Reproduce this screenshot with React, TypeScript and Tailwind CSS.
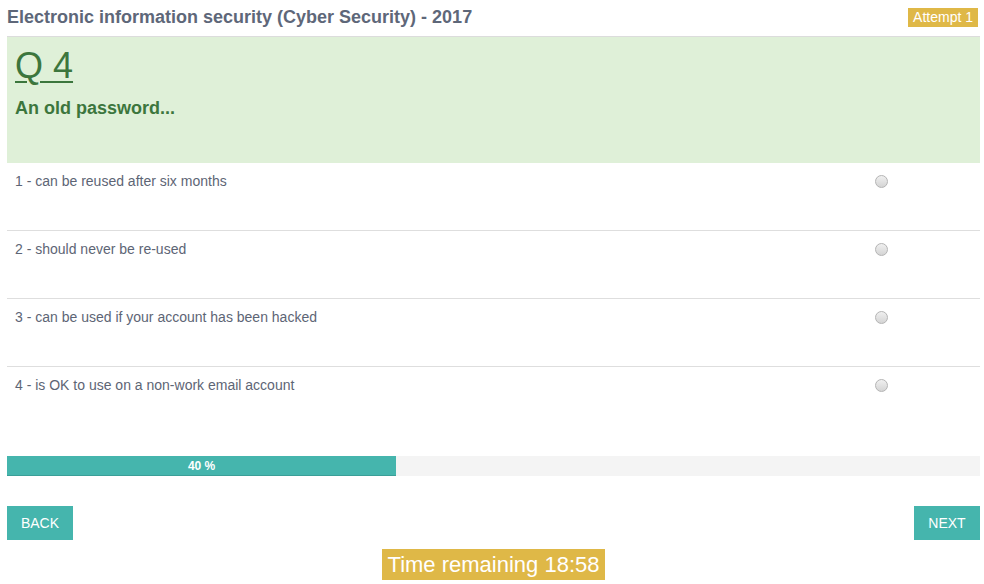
const options = [
  "1 - can be reused after six months",
  "2 - should never be re-used",
  "3 - can be used if your account has been hacked",
  "4 - is OK to use on a non-work email account",
];

function Radio() {
  return (
    <span className="block w-[13px] h-[13px] rounded-full border border-[#b4b4b4] bg-gradient-to-b from-[#f0f0f0] to-[#d4d4d4]" />
  );
}

export default function App() {
  const progress = 40;
  return (
    <div className="w-[984px] h-[584px] bg-white font-['Liberation_Sans',Arial,sans-serif] overflow-hidden">
      <div className="pl-[7px] pr-[4px]">
        {/* Header */}
        <div className="flex items-start justify-between h-[36px]">
          <h1 className="mt-[7px] text-[18px] font-bold text-[#5e6779] leading-[20px]">
            Electronic information security (Cyber Security) - 2017
          </h1>
          <span className="mt-[8px] mr-[2px] bg-[#dfb847] text-white text-[14px] leading-[19px] px-[5px]">
            Attempt 1
          </span>
        </div>

        {/* Question */}
        <div className="border-t border-[#dcdcdc] bg-[#dff0d8] h-[127px] px-[8px] pt-[8px] text-[#3c763d]">
          <div className="text-[36px] leading-[42px] underline decoration-2 underline-offset-[3px]">Q 4</div>
          <div className="mt-[10px] text-[18px] font-bold leading-[22px]">An old password...</div>
        </div>

        {/* Options */}
        <div>
          {options.map((opt, i) => (
            <div
              key={i}
              className={`flex items-start h-[68px] pt-[10px] px-[8px] ${i < options.length - 1 ? "border-b border-[#dedede]" : ""}`}
            >
              <span className="flex-1 text-[14px] leading-[17px] text-[#5d6575]">{opt}</span>
              <span className="mr-[84px] mt-[2px]">
                <Radio />
              </span>
            </div>
          ))}
        </div>

        {/* Progress */}
        <div className="mt-[21px] h-[20px] bg-[#f4f4f4] flex">
          <div
            className="h-full bg-[#45b5ad] border-b border-[#3a9f98] flex items-center justify-center text-white text-[12px] font-bold"
            style={{ width: `${progress}%` }}
          >
            {progress} %
          </div>
        </div>

        {/* Nav */}
        <div className="mt-[30px] flex justify-between">
          <button className="w-[66px] h-[34px] bg-[#45b5ad] text-white text-[14px] uppercase">Back</button>
          <button className="w-[66px] h-[34px] bg-[#45b5ad] text-white text-[14px] uppercase">Next</button>
        </div>

        <div className="mt-[9px] flex justify-center">
          <span className="bg-[#dfb847] text-white text-[22px] leading-[31px] px-[6px]">Time remaining 18:58</span>
        </div>
      </div>
    </div>
  );
}
